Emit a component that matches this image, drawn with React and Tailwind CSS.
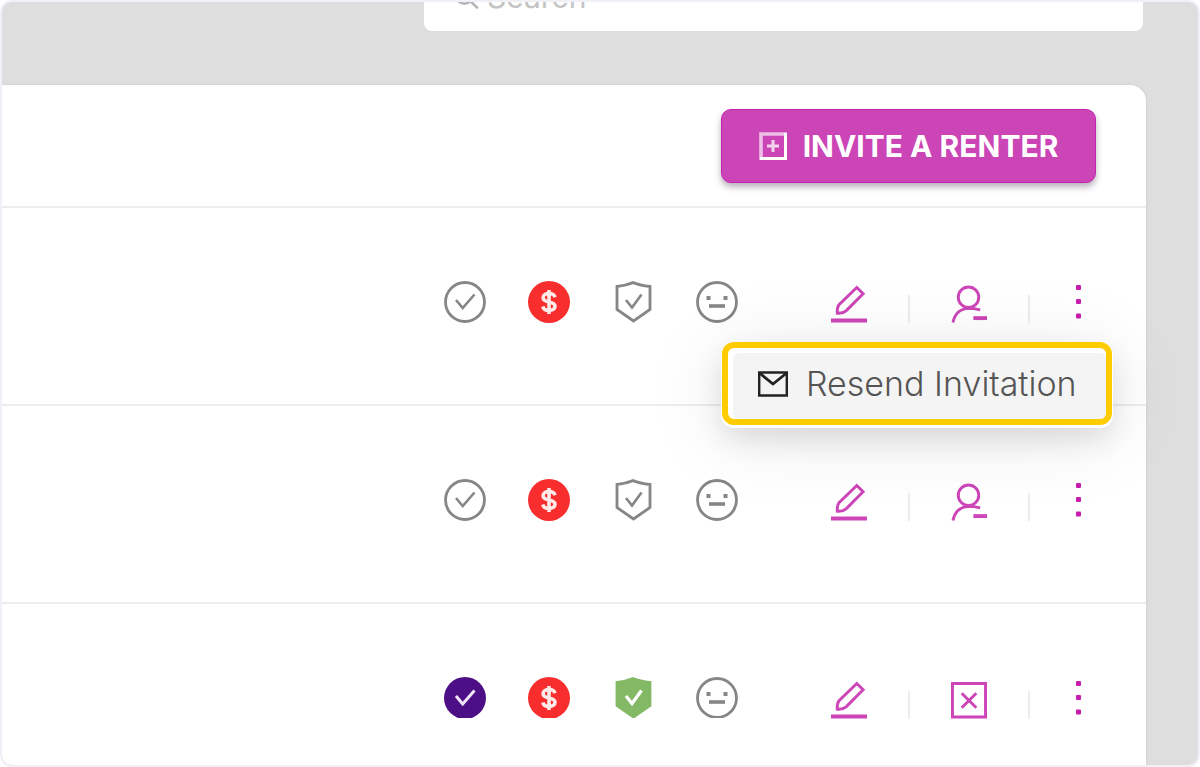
import { useState } from "react";

// Icons
function CheckCircleIcon({ filled }) {
  return (
    <svg viewBox="0 0 42 42" className="h-[42px] w-[42px] shrink-0" fill="none">
      <circle
        cx="21"
        cy="21"
        r={filled ? 21 : 19.5}
        fill={filled ? "#4d0f86" : "none"}
        stroke={filled ? "none" : "#868686"}
        strokeWidth="2.8"
      />
      <path
        d="M12 19l6.700 8L30.500 13.500"
        stroke={filled ? "#f0e4f8" : "#868686"}
        strokeWidth={filled ? 3 : 2.6}
      />
    </svg>
  );
}

function DollarIcon() {
  return (
    <svg viewBox="0 0 42 42" className="h-[42px] w-[42px] shrink-0" fill="none">
      <circle cx="21" cy="21" r="21" fill="#f82e2e" />
      <path
        d="M27 16.2c-.7-2.4-3-3.7-6-3.7-3.6 0-5.9 1.6-5.9 4.2 0 2.7 2.3 3.5 5.9 4.2 3.7.7 6 1.6 6 4.4 0 2.6-2.4 4.2-6 4.2-3.3 0-5.600-1.400-6.200-4M21 9v24"
        stroke="#ffeaea"
        strokeWidth="3.6"
      />
    </svg>
  );
}

function ShieldIcon({ filled }) {
  return (
    <svg viewBox="0 0 42 42" className="h-[42px] w-[42px] shrink-0" fill="none">
      <path
        d="M5 5.500Q14 4.500 21 1.600 28 4.500 38 5.500V28.500L21.500 40 5 28.500z"
        fill={filled ? "#83b964" : "none"}
        stroke={filled ? "#83b964" : "#868686"}
        strokeWidth="2.8"
      />
      <path
        d="M14 19l6 7.500L29.500 13.500"
        stroke={filled ? "#fff" : "#868686"}
        strokeWidth={filled ? 3.2 : 2.6}
      />
    </svg>
  );
}

function MehIcon() {
  return (
    <svg viewBox="0 0 42 42" className="h-[42px] w-[42px] shrink-0" fill="none" stroke="#868686">
      <circle cx="21" cy="21" r="19.5" strokeWidth="2.8" />
      <path d="M10.500 17h4M27.500 17h4" strokeWidth="4" />
      <path d="M13 25h16" strokeWidth="3.6" />
    </svg>
  );
}

function PencilIcon() {
  return (
    <svg viewBox="0 0 37 38" className="h-[38px] w-9" fill="none" stroke="#cd45b8">
      <path d="M26.500 2l6.500 6.500L15.500 26Q12 29 6.500 28.500 6 23 8 20z" strokeWidth="3" />
      <path d="M0 36h37" strokeWidth="4" />
    </svg>
  );
}

function RemoveUserIcon() {
  return (
    <svg viewBox="0 0 37 38" className="h-[38px] w-9" fill="none" stroke="#cd45b8">
      <circle cx="18" cy="12" r="10.5" strokeWidth="3" />
      <path d="M2 38Q5 24 18 23.500q5 0 12 1.500" strokeWidth="3" />
      <path d="M23 33.500h14" strokeWidth="4" />
    </svg>
  );
}

function CloseSquareIcon() {
  return (
    <svg viewBox="0 0 37 38" className="h-[38px] w-9" fill="none" stroke="#cd45b8">
      <path d="M1.500 2h34v34.500h-34z" strokeWidth="3" />
      <path d="M11 12l15 15M26 12L11 27" strokeWidth="3" />
    </svg>
  );
}

function DotsIcon() {
  return (
    <svg viewBox="0 0 16 38" className="h-[38px] w-4" fill="#c81cae">
      <rect x="5" y="0" width="5" height="5" rx="1" />
      <rect x="5" y="14" width="5" height="5" rx="1" />
      <rect x="5" y="28.5" width="5" height="5" rx="1" />
    </svg>
  );
}

function PlusSquareIcon() {
  return (
    <svg viewBox="0 0 28 28" className="h-7 w-7" fill="none">
      <path d="M2 28V2h26" stroke="#eebfe7" strokeWidth="3.6" />
      <path d="M26.500 1v25.500H1" stroke="#fff" strokeWidth="3" />
      <path d="M14 8v12M8 14h12" stroke="#f4d3ef" strokeWidth="3" />
    </svg>
  );
}

function MailIcon() {
  return (
    <svg viewBox="0 0 30 26" className="h-[26px] w-[30px]" fill="none" stroke="#222">
      <path d="M1.200 1.500h27.600v23H1.200z" strokeWidth="2.4" />
      <path d="M2 2.500l13 10.500L28 2.500" strokeWidth="2.8" />
    </svg>
  );
}

const renters = [
  { id: 1, verified: false, action: "remove" },
  { id: 2, verified: false, action: "remove" },
  { id: 3, verified: true, action: "cancel" },
];

function ResendMenu() {
  return (
    <div className="absolute top-[134px] right-[34px] z-10 w-[390px] rounded-xl border-6 border-[#ffcc00] bg-white pt-[5px] pl-[5px] shadow-[0_2px_0_1px_rgba(255,255,255,1),0_14px_28px_rgba(0,0,0,0.1),0_10px_80px_rgba(0,0,0,0.1)]">
      <button
        type="button"
        className="flex h-[66px] w-full items-center gap-[18px] rounded-md bg-[#f4f4f4] pb-1 pl-[25px] font-['Inter',sans-serif] text-[34px] leading-10 font-light whitespace-nowrap text-[#555]"
      >
        <MailIcon />
        Resend Invitation
      </button>
    </div>
  );
}

function RenterRow({ renter, menuOpen, onMenu }) {
  return (
    <div className="relative flex h-[198px] shrink-0 items-start justify-end gap-[93px] border-b-2 border-[#ededed] pt-[73px] pr-[59px]">
      {/* Status */}
      <div className={`flex gap-[42px] ${renter.verified ? "h-[41px] overflow-hidden" : ""}`}>
        <CheckCircleIcon filled={renter.verified} />
        <DollarIcon />
        <ShieldIcon filled={renter.verified} />
        <MehIcon />
      </div>

      {/* Actions */}
      <div className="flex items-end gap-[41px] pt-1">
        <button type="button" aria-label="Edit">
          <PencilIcon />
        </button>
        <span className="h-7 w-0.5 bg-[#ececec]" />
        <button type="button" aria-label="Remove">
          {renter.action === "remove" ? <RemoveUserIcon /> : <CloseSquareIcon />}
        </button>
        <span className="h-7 w-0.5 bg-[#ececec]" />
        <button type="button" aria-label="More" onClick={onMenu}>
          <DotsIcon />
        </button>
      </div>

      {menuOpen && <ResendMenu />}
    </div>
  );
}

function App() {
  const [openMenu, setOpenMenu] = useState(1);

  return (
    <div className="flex h-screen flex-col overflow-hidden rounded-xl border-2 border-[#f0f0f6] bg-[#dedede]">
      {/* Search */}
      <div className="flex h-[29px] shrink-0 items-end justify-end overflow-hidden pr-[55px]">
        <label className="flex h-[68px] w-[63%] shrink-0 items-center gap-2 rounded-lg bg-white pl-[30px] text-[#b4b4b4]">
          <svg viewBox="0 0 26 26" className="h-[26px] w-[26px]" fill="none" stroke="currentColor" strokeWidth="2.6">
            <circle cx="11" cy="11" r="9" />
            <path d="M17.500 17.500L25 25" />
          </svg>
          <input
            type="text"
            placeholder="Search"
            className="w-full bg-transparent font-['Inter',sans-serif] text-[30px] leading-10 outline-none placeholder:text-[#c4c4c4]"
          />
        </label>
      </div>

      {/* Renters */}
      <div className="mt-[54px] mr-[52px] flex min-h-0 flex-1 flex-col rounded-tr-2xl bg-white shadow-[0_0_3px_rgba(0,0,0,0.1)]">
        <div className="flex h-[123px] shrink-0 items-start justify-end border-b-2 border-[#ededed] pt-6 pr-[50px]">
          <button
            type="button"
            className="flex h-[74px] w-[375px] items-center justify-center gap-4 rounded-[10px] border border-[#c622b0] bg-[#cb45b6] font-['Inter',sans-serif] text-[30px] leading-10 font-bold whitespace-nowrap text-white shadow-[0_4px_6px_rgba(50,30,60,0.35)]"
          >
            <PlusSquareIcon />
            INVITE A RENTER
          </button>
        </div>

        {renters.map((renter) => (
          <RenterRow
            key={renter.id}
            renter={renter}
            menuOpen={openMenu === renter.id}
            onMenu={() => setOpenMenu(openMenu === renter.id ? null : renter.id)}
          />
        ))}
      </div>
    </div>
  );
}

export default App;
